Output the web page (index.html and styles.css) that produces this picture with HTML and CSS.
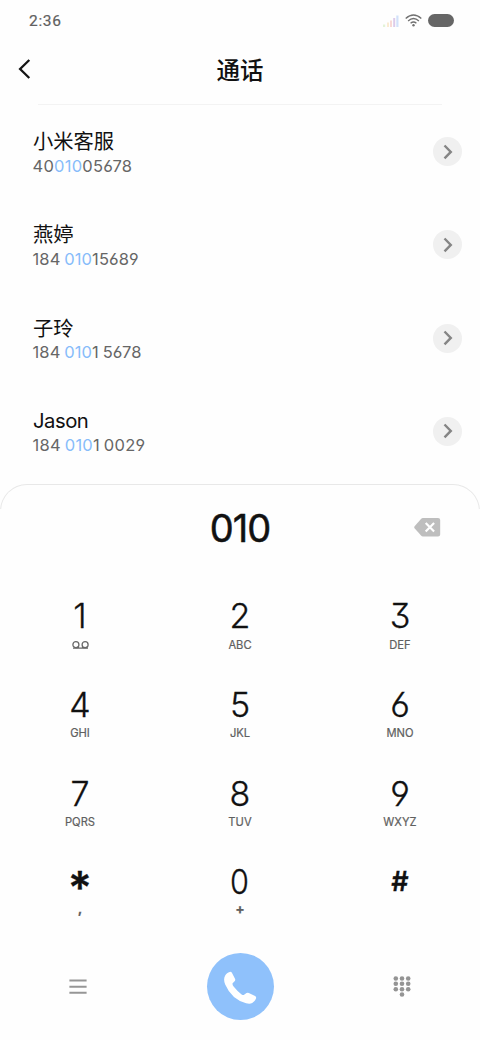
FILE: index.html
```html
<!DOCTYPE html>
<html lang="zh-CN">
<head>
<meta charset="utf-8">
<title>通话</title>
<link rel="stylesheet" href="styles.css">
</head>
<body>
<main class="screen">
  <header class="status">
    <span class="time">2:36</span>
    <div class="indicators">
      <svg class="signal" width="16" height="12" viewBox="0 0 16 12"><rect y="9.5" width="2.2" height="2.5" fill="#e3f3d8"/><rect x="4" y="7.5" width="2" height="4.5" fill="#faebd2"/><rect x="7" y="5.5" width="2" height="6.5" fill="#f8d9d6"/><rect x="10.2" y="3" width="2" height="9" fill="#dccbea"/><rect x="13.3" y=".5" width="2.2" height="11.5" fill="#d2e1fa"/></svg>
      <svg class="wifi" width="17" height="13" viewBox="0 0 17 13" fill="none" stroke="#707070" stroke-width="1.3"><path d="M.7 4.5Q8.5-2.6 16.3 4.5M3.1 6.9Q8.5 2 13.9 6.9M5.6 9.3Q8.5 6.7 11.4 9.3"/><circle cx="8.5" cy="11.3" r="1.2" fill="#707070" stroke="none"/></svg>
      <span class="battery"></span>
    </div>
  </header>
  <div class="titlebar">
    <svg class="back" width="14" height="20" viewBox="0 0 14 20" fill="none" stroke="#151515" stroke-width="2.3"><path d="M12.3 1 3.1 10l9.2 9"/></svg>
    <h1>通话</h1>
  </div>
  <hr class="rule">
  <section class="contacts">
    <article class="contact"><div><h2>小米客服</h2><p class="service">40<b>010</b>05678</p></div><span class="more"><svg width="10" height="16" viewBox="0 0 10 16"><path d="m1.5 1.5 6.3 6.4-6.3 6.4"/></svg></span></article>
    <article class="contact"><div><h2>燕婷</h2><p>184 <b>010</b>15689</p></div><span class="more"><svg width="10" height="16" viewBox="0 0 10 16"><path d="m1.5 1.5 6.3 6.4-6.3 6.4"/></svg></span></article>
    <article class="contact"><div><h2>子玲</h2><p>184 <b>010</b>1 5678</p></div><span class="more"><svg width="10" height="16" viewBox="0 0 10 16"><path d="m1.5 1.5 6.3 6.4-6.3 6.4"/></svg></span></article>
    <article class="contact"><div><h2 class="latin">Jason</h2><p class="last">184 <b>010</b>1 0029</p></div><span class="more"><svg width="10" height="16" viewBox="0 0 10 16"><path d="m1.5 1.5 6.3 6.4-6.3 6.4"/></svg></span></article>
  </section>
  <section class="dialer">
    <div class="entry">
      <output>010</output>
      <svg class="delete" width="27" height="19" viewBox="0 0 27 19"><path d="M9 0H24Q26.2 0 26.2 2V16.5Q26.2 18.5 24 18.5H9Q7.8 18.5 7 17.6L.6 10.3Q-.2 9.3.6 8.3L7 .9Q7.8 0 9 0Z" fill="#bebebe"/><path d="m11.7 5 8.4 8.5m0-8.5-8.4 8.5" stroke="#fff" stroke-width="2.2"/></svg>
    </div>
    <div class="keys">
      <div class="key"><span class="digit">1</span><small><svg width="17" height="8" viewBox="0 0 17 8" fill="none" stroke="#686868" stroke-width="1.3"><path d="M1 7.2H7L6 6M16 7.2H10L11 6M6 7.2H11"/><circle cx="3.9" cy="3.7" r="3"/><circle cx="13.1" cy="3.7" r="3"/></svg></small></div>
      <div class="key"><span class="digit">2</span><small>ABC</small></div>
      <div class="key"><span class="digit">3</span><small>DEF</small></div>
      <div class="key"><span class="digit">4</span><small>GHI</small></div>
      <div class="key"><span class="digit">5</span><small>JKL</small></div>
      <div class="key"><span class="digit">6</span><small>MNO</small></div>
      <div class="key"><span class="digit">7</span><small>PQRS</small></div>
      <div class="key"><span class="digit">8</span><small>TUV</small></div>
      <div class="key"><span class="digit">9</span><small>WXYZ</small></div>
      <div class="key"><span class="digit star">*</span><small class="mark comma">,</small></div>
      <div class="key"><span class="digit zero">0</span><small class="mark">+</small></div>
      <div class="key"><span class="digit hash">#</span></div>
    </div>
    <footer class="actions">
      <svg width="18" height="16" viewBox="0 0 18 16"><path d="M.4 1.6H17.6M.4 7.7H17.6M.4 13.8H17.6" stroke="#969696" stroke-width="2"/></svg>
      <span class="call"><svg width="34" height="34" viewBox="0 0 34 34"><path d="M2.2 5.4C3.2 3.7 4.9 2.4 6.7 1.9Q8.2 1.5 8.9 2.8L12 8.8Q12.7 10.2 11.6 11.3L9.6 13.3Q9.2 14.6 10.6 16.6Q14.7 21.8 18.6 24.4Q20.3 25.4 21.1 24.8L23.5 23.1Q24.5 22.3 25.8 22.9L32.1 26.1Q33.6 26.9 33 28.5Q31.8 31.6 29.2 33Q26.9 34.3 23.1 33.3Q8.5 29.2 2.2 14.5Q0 8.9 2.2 5.4Z" fill="#fff"/></svg></span>
      <svg width="18" height="21" viewBox="0 0 18 21" fill="#949494"><circle cx="2.8" cy="2.5" r="2.3"/><circle cx="9" cy="2.5" r="2.3"/><circle cx="15.2" cy="2.5" r="2.3"/><circle cx="2.8" cy="7.8" r="2.3"/><circle cx="9" cy="7.8" r="2.3"/><circle cx="15.2" cy="7.8" r="2.3"/><circle cx="2.8" cy="13.2" r="2.3"/><circle cx="9" cy="13.2" r="2.3"/><circle cx="15.2" cy="13.2" r="2.3"/><circle cx="9" cy="18.5" r="2.3"/></svg>
    </footer>
  </section>
</main>
</body>
</html>
```
FILE: styles.css
```css
* { box-sizing: border-box; }
body, h1, h2, p { margin: 0; }
body { background: #fff; color: #111; font-family: Inter, "Noto Sans CJK SC", sans-serif; font-feature-settings: "cv03", "cv04", "cv09"; }
svg { display: block; flex: none; }
.screen { width: 480px; height: 1040px; background: #fefefe; overflow: hidden; display: flex; flex-direction: column; }
.status { height: 41px; padding: 0 26px 0 29px; display: flex; justify-content: space-between; align-items: center; }
.time { font: 400 15.5px/20px Roboto, sans-serif; color: #606060; letter-spacing: .7px; padding-top: 1px; -webkit-text-stroke: .2px #606060; }
.indicators { display: flex; align-items: center; }
.wifi { margin: 0 6px; }
.battery { width: 26px; height: 13px; border-radius: 7px; background: #666; }
.titlebar { height: 63px; display: grid; grid-template-columns: 100px 1fr 100px; align-items: center; padding-bottom: 7px; }
.back { margin-left: 17px; }
h1 { text-align: center; font: 500 23.5px/32px "Noto Sans CJK SC", sans-serif; }
.rule { width: 404px; height: 1px; flex: none; border: 0; margin: 0 auto; background: #f3f3f3; }
.contacts { height: 379px; padding: 22px 18px 0 33px; flex: none; }
.contact { height: 93.3px; display: flex; justify-content: space-between; align-items: flex-start; }
h2 { font: 400 20.3px/26px "Noto Sans CJK SC", sans-serif; height: 26.5px; }
h2.latin { font-family: Inter, sans-serif; letter-spacing: -.5px; padding-top: 1px; }
.contact p { font-size: 16.5px; line-height: 24px; color: #666; white-space: pre; margin-left: -.5px; word-spacing: -1px; letter-spacing: .12px; }
.contact p.service, .contact p.last { letter-spacing: .25px; }
.contact b { font-weight: 400; color: #87bcfa; }
.more { width: 29px; height: 29px; margin-top: 10px; border-radius: 50%; background: #f0f0f0; display: grid; place-items: center; }
.more path { fill: none; stroke: #858585; stroke-width: 2.4; }
.dialer { flex: 1; border: 1px solid #e8e8e8; border-bottom: 0; border-radius: 27px 27px 0 0; position: relative; }
.dialer::after { content: ""; position: absolute; inset: 24px -1px 0; border: 1px solid #fefefe; border-width: 0 1px; }
.entry { height: 85px; display: grid; grid-template-columns: 1fr 140px 1fr; align-items: center; }
output { grid-column: 2; text-align: center; font-size: 38px; font-weight: 400; line-height: 48px; letter-spacing: -1px; -webkit-text-stroke: .5px #111; }
.delete { justify-self: end; margin-right: 38px; }
.keys { display: grid; grid-template-columns: repeat(3, 160px); grid-auto-rows: 88.8px; margin: 23px -1px 0; }
.key { display: flex; flex-direction: column; align-items: center; }
.digit { font-size: 34px; line-height: 46px; font-weight: 300; -webkit-text-stroke: .3px #111; }
.key small { height: 14px; margin-top: -1.5px; font-size: 11.2px; line-height: 14px; color: #606060; font-weight: 400; -webkit-text-stroke: .2px #606060; display: flex; align-items: center; }
.zero { transform: scaleX(.9); }
.star { font-size: 45px; font-weight: 600; padding-top: 6px; height: 46px; }
.hash { font-size: 27px; font-weight: 600; }
.key .mark { font-size: 14px; font-weight: 700; margin-top: -3.5px; }
.key .comma { margin-top: -4.5px; }
.actions { display: grid; grid-template-columns: 156px 166px 156px; place-items: center; margin-top: 5px; }
.actions > :first-child { margin-right: 2px; }
.actions > :last-child { margin-left: 2px; }
.call { width: 67px; height: 67px; background: #8fc1fb; border-radius: 50%; display: grid; place-items: center; }
.call svg { margin-right: 1px; }
```
